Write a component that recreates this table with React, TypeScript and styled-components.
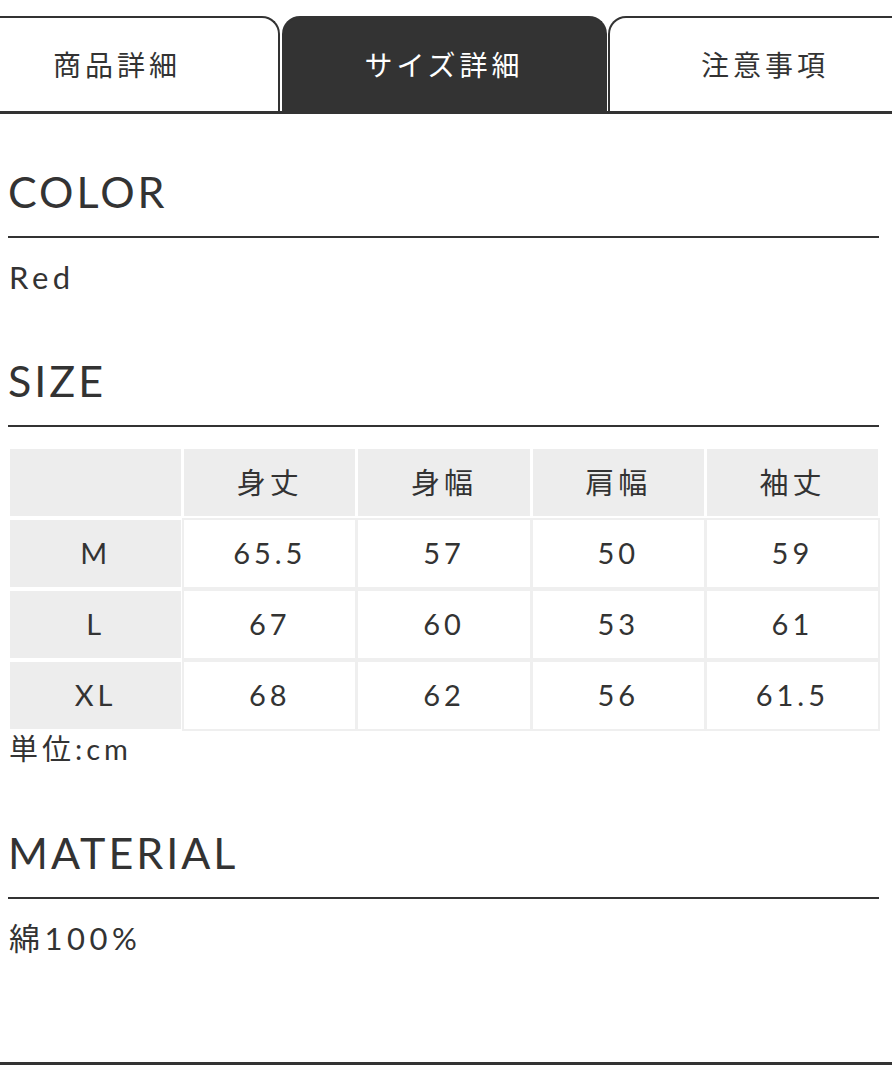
import styled, { createGlobalStyle } from "styled-components";

const GlobalStyle = createGlobalStyle`
  body {
    margin: 0;
    background: #fff;
    overflow-x: hidden;
    font-family: Lato, "Noto Sans CJK JP", sans-serif;
    color: #333;
  }
`;

const tabs = [
  { label: "商品詳細", width: 326 },
  { label: "サイズ詳細", width: 325 },
  { label: "注意事項", width: 314 },
];
const activeTab = 1;

const columns = ["身丈", "身幅", "肩幅", "袖丈"];
const sizes = [
  { label: "M", values: ["65.5", "57", "50", "59"] },
  { label: "L", values: ["67", "60", "53", "61"] },
  { label: "XL", values: ["68", "62", "56", "61.5"] },
];

export default function App() {
  return (
    <Page>
      <GlobalStyle />
      <TabBar>
        <TabRow>
          {tabs.map((t, i) => (
            <Tab key={t.label} $width={t.width} $active={i === activeTab}>
              {t.label}
            </Tab>
          ))}
        </TabRow>
      </TabBar>

      <Content>
        <Section>
          <Heading>COLOR</Heading>
          <BodyText>Red</BodyText>
        </Section>

        <Section>
          <Heading>SIZE</Heading>
          <SizeTable>
            <HeadCell />
            {columns.map((c) => (
              <HeadCell key={c}>{c}</HeadCell>
            ))}
            {sizes.map((row) => (
              <Row key={row.label}>
                <HeadCell>{row.label}</HeadCell>
                {row.values.map((v, i) => (
                  <DataCell key={i}>{v}</DataCell>
                ))}
              </Row>
            ))}
          </SizeTable>
          <Note>単位:cm</Note>
        </Section>

        <Section>
          <Heading>MATERIAL</Heading>
          <BodyText>綿100%</BodyText>
        </Section>
      </Content>

      <FooterRule />
    </Page>
  );
}

const Page = styled.div`
  width: 892px;
  overflow: hidden;
`;

const TabBar = styled.nav`
  padding-top: 16px;
  border-bottom: 3px solid #333;
`;

const TabRow = styled.div`
  display: flex;
  gap: 1.5px;
  margin-left: -46px;
  width: max-content;
`;

const Tab = styled.div<{ $active?: boolean; $width: number }>`
  box-sizing: border-box;
  width: ${(p) => p.$width}px;
  height: 95px;
  display: flex;
  align-items: center;
  justify-content: center;
  padding-bottom: 2px;
  font-family: "Noto Sans CJK JP", sans-serif;
  font-size: 28px;
  letter-spacing: 4px;
  border: 2.5px solid #333;
  border-bottom: none;
  border-radius: 18px 18px 0 0;
  background: ${(p) => (p.$active ? "#333" : "#fff")};
  color: ${(p) => (p.$active ? "#fff" : "#333")};
`;

const Content = styled.main`
  display: flex;
  flex-direction: column;
  gap: 59px;
  padding: 53px 13px 0 8px;
`;

const Section = styled.section`
  display: flex;
  flex-direction: column;
`;

const Heading = styled.h2`
  margin: 0;
  font-size: 43px;
  font-weight: 400;
  line-height: 50px;
  letter-spacing: 3px;
  padding-bottom: 19px;
  border-bottom: 2px solid #333;
`;

const BodyText = styled.p`
  margin: 19px 0 0 1px;
  font-size: 31px;
  line-height: 40px;
  letter-spacing: 4.5px;
`;

const SizeTable = styled.div`
  display: grid;
  grid-template-columns: repeat(5, 1fr);
  grid-auto-rows: 67px;
  gap: 4px 3px;
  margin: 22px 1px 0 2px;
`;

const Row = styled.div`
  display: contents;
`;

const HeadCell = styled.div`
  display: flex;
  align-items: center;
  justify-content: center;
  padding-bottom: 3px;
  background: #ededed;
  font-size: 29px;
  letter-spacing: 4px;
`;

const DataCell = styled(HeadCell)`
  background: #fff;
  box-shadow: 0 0 0 2px #efefef;
`;

const Note = styled.p`
  margin: 0 0 0 1px;
  font-size: 29px;
  line-height: 40px;
  letter-spacing: 4px;
`;

const FooterRule = styled.hr`
  margin: 104px 0 0;
  border: none;
  border-top: 3px solid #333;
`;
